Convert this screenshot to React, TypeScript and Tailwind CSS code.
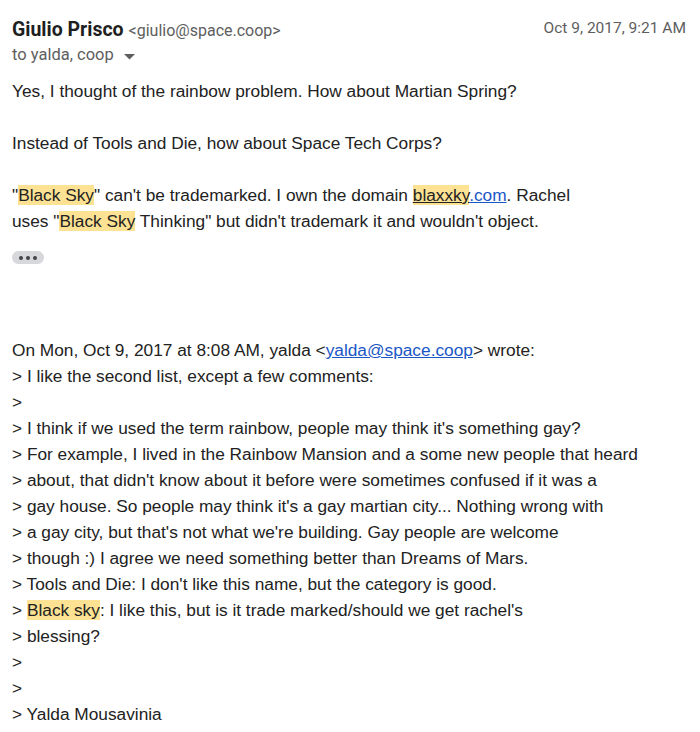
import React from "react";

const hl = "bg-[#fde293]";

function Mark({ children }: { children: React.ReactNode }) {
  return <span className={hl}>{children}</span>;
}

const quoted: React.ReactNode[] = [
  "> I like the second list, except a few comments:",
  ">",
  "> I think if we used the term rainbow, people may think it's something gay?",
  "> For example, I lived in the Rainbow Mansion and a some new people that heard",
  "> about, that didn't know about it before were sometimes confused if it was a",
  "> gay house. So people may think it's a gay martian city... Nothing wrong with",
  "> a gay city, but that's not what we're building. Gay people are welcome",
  "> though :) I agree we need something better than Dreams of Mars.",
  "> Tools and Die: I don't like this name, but the category is good.",
  <>
    {"> "}
    <Mark>Black sky</Mark>: I like this, but is it trade marked/should we get rachel's
  </>,
  "> blessing?",
  ">",
  ">",
  "> Yalda Mousavinia",
];

export default function App() {
  return (
    <div className="w-[700px] h-[732px] overflow-hidden bg-white text-[#222] font-['Liberation_Sans',Arial,sans-serif]">
      {/* header */}
      <div className="flex items-start justify-between pl-3 pr-[14px] pt-[15px]">
        <div>
          <div className="flex items-baseline gap-[5px] font-['Roboto',sans-serif]">
            <span className="text-[19.5px] font-bold text-[#1f1f1f]">Giulio Prisco</span>
            <span className="text-[16px] text-[#5e5e5e]">&lt;giulio@space.coop&gt;</span>
          </div>
          <div className="-mt-[1px] flex items-center gap-[10px] font-['Roboto',sans-serif] text-[16.5px] text-[#5e5e5e]">
            <span>to yalda, coop</span>
            <svg width="11" height="6" viewBox="0 0 11 6" className="mt-[2px]">
              <path d="M0 0 L11 0 L5.5 5.5 Z" fill="#5e5e5e" />
            </svg>
          </div>
        </div>
        <div className="pt-[2px] font-['Roboto',sans-serif] text-[15.5px] text-[#5e5e5e]">Oct 9, 2017, 9:21 AM</div>
      </div>

      {/* body */}
      <div className="pl-3 pt-[10px] text-[17.3px] leading-[26px]">
        <p>Yes, I thought of the rainbow problem. How about Martian Spring?</p>
        <p className="mt-[26px]">Instead of Tools and Die, how about Space Tech Corps?</p>
        <p className="mt-[26px]">
          "<Mark>Black Sky</Mark>" can't be trademarked. I own the domain{" "}
          <span className="underline decoration-[#222]">
            <Mark>blaxxky</Mark>
          </span>
          <span className="text-[#1a57c6] underline">.com</span>. Rachel
          <br />
          uses "<Mark>Black Sky</Mark> Thinking" but didn't trademark it and wouldn't object.
        </p>
        <div className="mt-[17px] flex h-[13px] w-[32px] items-center justify-center gap-[3px] rounded-full bg-[#d6d8dc]">
          <span className="h-[4px] w-[4px] rounded-full bg-[#444]" />
          <span className="h-[4px] w-[4px] rounded-full bg-[#444]" />
          <span className="h-[4px] w-[4px] rounded-full bg-[#444]" />
        </div>

        <div className="mt-[73px]">
          <div>
            On Mon, Oct 9, 2017 at 8:08 AM, yalda &lt;
            <span className="text-[#1a57c6] underline">yalda@space.coop</span>&gt; wrote:
          </div>
          {quoted.map((line, i) => (
            <div key={i}>{line}</div>
          ))}
        </div>
      </div>
    </div>
  );
}
